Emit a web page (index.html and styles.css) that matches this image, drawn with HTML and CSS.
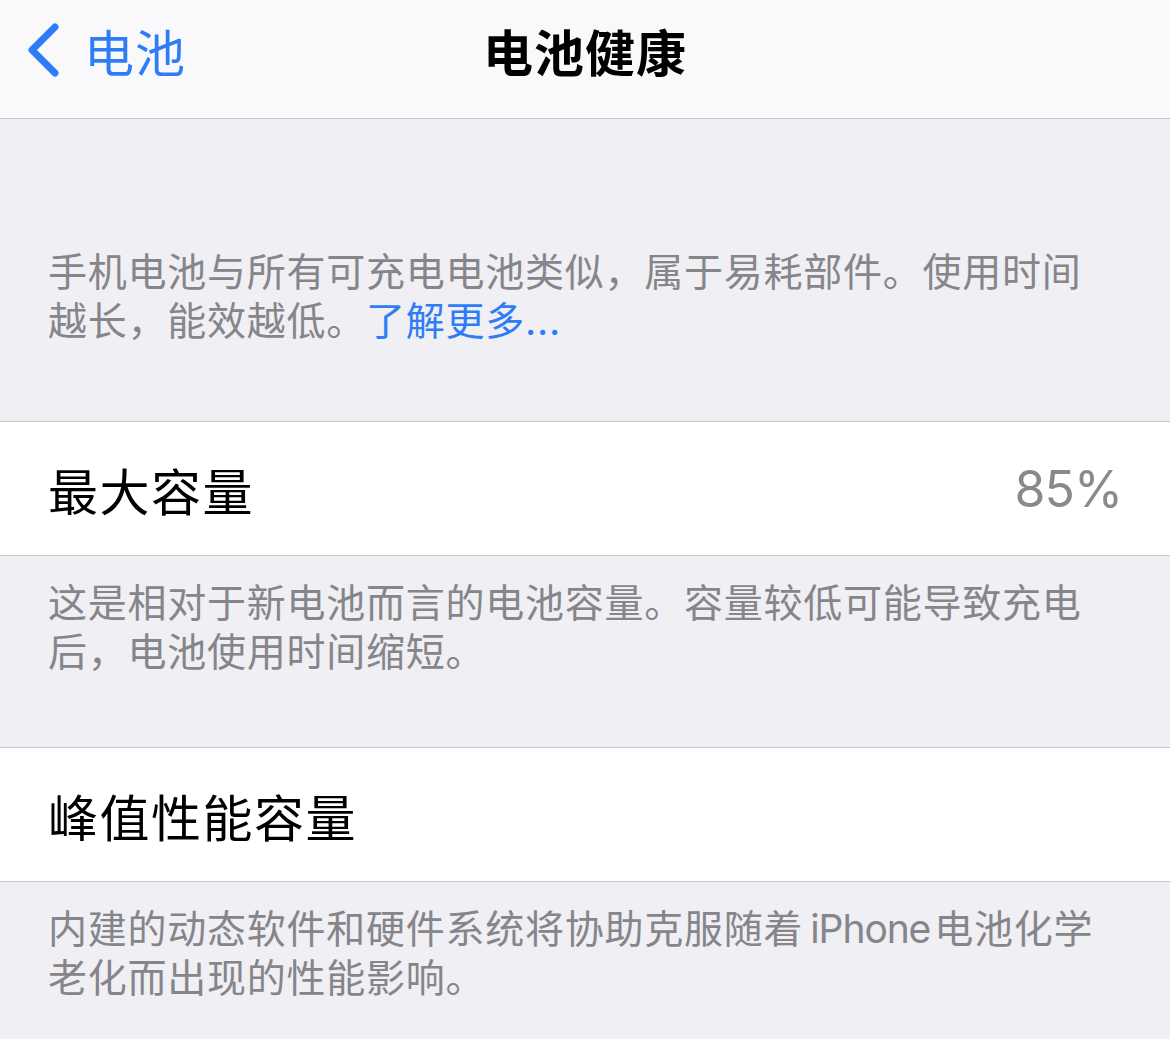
FILE: index.html
```html
<!DOCTYPE html>
<html lang="zh-CN">
<head>
    <meta charset="UTF-8">
    <meta name="viewport" content="width=device-width, initial-scale=1.0">
    <title>电池健康</title>
    <link rel="stylesheet" href="styles.css">
</head>
<body>
    <header class="nav">
        <a class="nav-back" href="#">
            <svg class="chevron" width="36" height="56" viewBox="0 0 36 56">
                <polyline points="31,5 8,28 31,51" fill="none" stroke="currentColor" stroke-width="7" stroke-linecap="round" stroke-linejoin="round"/>
            </svg>
            <span>电池</span>
        </a>
        <h1 class="nav-title">电池健康</h1>
        <div></div>
    </header>

    <p class="group-footer intro">手机电池与所有可充电电池类似，属于易耗部件。使用时间<br>越长，能效越低。<a href="#">了解更多...</a></p>

    <div class="row">
        <span class="row-label">最大容量</span>
        <span class="row-value">85%</span>
    </div>
    <p class="group-footer">这是相对于新电池而言的电池容量。容量较低可能导致充电<br>后，电池使用时间缩短。</p>

    <div class="row">
        <span class="row-label">峰值性能容量</span>
    </div>
    <p class="group-footer">内建的动态软件和硬件系统将协助克服随着<span class="latin">iPhone</span>电池化学<br>老化而出现的性能影响。</p>
</body>
</html>
```

FILE: styles.css
```css
body {
    margin: 0;
    padding: 0;
    background-color: #efeff4;
    font-family: Inter, "Noto Sans CJK SC", sans-serif;
    color: #000;
    min-height: 1039px;
}

.nav {
    display: grid;
    grid-template-columns: 1fr auto 1fr;
    align-items: center;
    height: 100px;
    padding-bottom: 18px;
    background-color: #f9f9fb;
    border-bottom: 1px solid #c4c4c7;
}

.nav-back {
    display: flex;
    align-items: center;
    gap: 24px;
    padding-left: 24px;
    color: #2f7df6;
    text-decoration: none;
    font-size: 50px;
    letter-spacing: 1px;
}

.chevron {
    display: block;
}

.nav-title {
    margin: 0;
    font-size: 50px;
    font-weight: bold;
    letter-spacing: 1px;
}

.group-footer {
    margin: 0;
    padding: 22px 48px 71px;
    font-size: 39px;
    line-height: 49px;
    letter-spacing: 0.75px;
    color: #85858a;
    white-space: nowrap;
}

.group-footer.intro {
    padding-top: 128px;
    padding-bottom: 76px;
}

.group-footer a {
    color: #2f7df6;
    text-decoration: none;
}

.latin {
    margin: 0 4px 0 7px;
    letter-spacing: -1.1px;
}

.row {
    display: flex;
    justify-content: space-between;
    align-items: center;
    height: 133px;
    padding: 0 48px;
    background-color: #fff;
    border-top: 1px solid #c8c8cb;
    border-bottom: 1px solid #c8c8cb;
}

.row-label {
    font-size: 50px;
    letter-spacing: 1.5px;
}

.row-value {
    font-size: 50px;
    letter-spacing: -1px;
    color: #8a8a8e;
}
```
